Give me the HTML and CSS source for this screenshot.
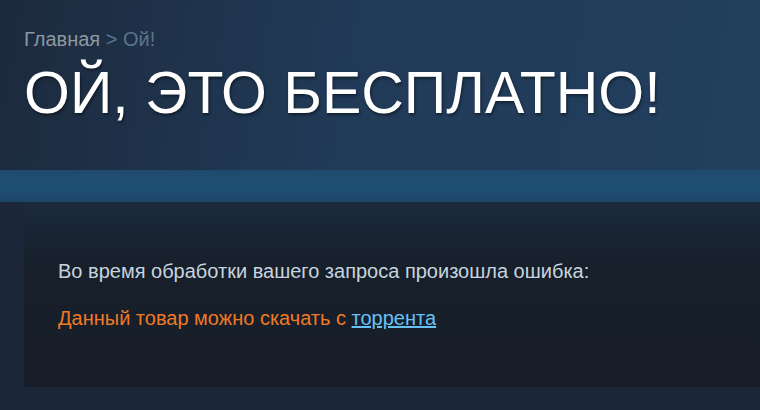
FILE: index.html
```html
<html>
<head>
<title>Ой!</title>
<link rel="stylesheet" href="styles.css">
</head>
<body>

<div class="page-head">
  <div class="breadcrumbs">
    <a href="#" class="crumb">Главная</a> &gt; <span class="crumb-current">Ой!</span>
  </div>
  <h1 class="page-title">ОЙ, ЭТО БЕСПЛАТНО!</h1>
</div>

<div class="band"></div>

<div class="error-box">
  <p class="error-text">Во время обработки вашего запроса произошла ошибка:</p>
  <p class="error-reason">Данный товар можно скачать с <a href="#" class="error-link">торрента</a></p>
</div>

</body>
</html>
```

FILE: styles.css
```css
body {
  margin: 0;
  padding: 0;
  font-family: 'Liberation Sans', Arial, sans-serif;
  background-color: #1b2738;
  height: 410px;
  overflow: hidden;
}

.page-head {
  height: 170px;
  box-sizing: border-box;
  padding: 27px 24px 0 24px;
  background: linear-gradient(100deg, #1c2a3d 0%, #213a57 45%, #223f5e 100%);
}

.breadcrumbs {
  font-size: 20px;
  line-height: 24px;
  color: #5b7489;
}

.crumb {
  color: #8f98a0;
  text-decoration: none;
}

.crumb-current {
  color: #5b7489;
}

.page-title {
  margin: 10px 0 0 0;
  font-family: 'Liberation Sans', Arial, sans-serif;
  font-weight: normal;
  font-size: 59px;
  line-height: 64px;
  color: #ffffff;
  text-shadow: 1px 2px 3px rgba(0, 0, 0, 0.45);
}

.band {
  height: 32px;
  background: linear-gradient(180deg, #1f4a6d 0%, #1e5075 60%, #1d4669 100%);
}

.error-box {
  margin-left: 24px;
  height: 185px;
  box-sizing: border-box;
  padding: 57px 34px 0 34px;
  background: linear-gradient(180deg, #1b2a3b 0%, #171f2b 35%, #171e29 100%);
}

.error-text {
  margin: 0;
  font-size: 20px;
  line-height: 24px;
  color: #c6d4df;
}

.error-reason {
  margin: 23px 0 0 0;
  font-size: 20px;
  line-height: 24px;
  color: #ee7a26;
}

.error-link {
  color: #67c1f5;
  text-decoration: underline;
}
```
